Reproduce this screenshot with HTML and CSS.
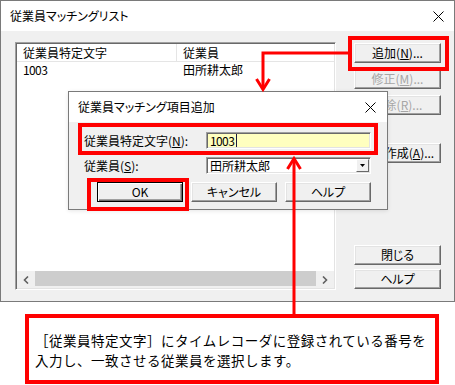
FILE: index.html
```html
<!DOCTYPE html>
<html lang="ja">
<head>
  <meta charset="UTF-8" />
  <meta name="viewport" content="width=device-width, initial-scale=1.0"/>
  <title>従業員マッチングリスト</title>
  <link rel="stylesheet" href="styles.css">
</head>
<body>
  <div class="screen">
    <div class="window main-window">
      <div class="title-bar">
        <span class="title">従業員マッチングリスト</span>
        <svg class="close" width="11" height="11" viewBox="0 0 11 11"><path d="M0.5 0.5L10.5 10.5M10.5 0.5L0.5 10.5"/></svg>
      </div>
      <div class="main-body">
        <div class="listview">
          <div class="lv-header">
            <div class="lv-col col-code">従業員特定文字</div>
            <div class="lv-col col-name">従業員</div>
          </div>
          <div class="lv-rows">
            <div class="lv-row">
              <div class="lv-col col-code"><span class="num">1003</span></div>
              <div class="lv-col col-name">田所耕太郎</div>
            </div>
          </div>
          <div class="hscroll">
            <div class="sb-arrow"><svg width="6" height="8" viewBox="0 0 6 8"><path d="M5 0.5L1.5 4L5 7.5"/></svg></div>
            <div class="sb-thumb"></div>
            <div class="sb-arrow"><svg width="6" height="8" viewBox="0 0 6 8"><path d="M1 0.5L4.5 4L1 7.5"/></svg></div>
          </div>
        </div>
        <div class="side">
          <div class="side-group">
            <button class="btn">追加(<u>N</u>)...</button>
            <button class="btn" disabled>修正(<u>M</u>)...</button>
            <button class="btn" disabled>削除(<u>R</u>)...</button>
            <button class="btn btn-gap">一括作成(<u>A</u>)...</button>
          </div>
          <div class="side-group">
            <button class="btn">閉じる</button>
            <button class="btn">ヘルプ</button>
          </div>
        </div>
      </div>
    </div>

    <div class="window dialog">
      <div class="title-bar">
        <span class="title">従業員マッチング項目追加</span>
        <svg class="close" width="11" height="11" viewBox="0 0 11 11"><path d="M0.5 0.5L10.5 10.5M10.5 0.5L0.5 10.5"/></svg>
      </div>
      <div class="dialog-body">
        <div class="field-row">
          <label class="field-label">従業員特定文字(<u>N</u>):</label>
          <div class="edit"><span class="num">1003</span><span class="caret"></span></div>
        </div>
        <div class="field-row">
          <label class="field-label">従業員(<u>S</u>):</label>
          <div class="combo">
            <span class="combo-text">田所耕太郎</span>
            <span class="combo-btn"><svg width="5" height="3" viewBox="0 0 5 3"><path d="M0 0H5L2.5 3Z"/></svg></span>
          </div>
        </div>
        <div class="dialog-buttons">
          <button class="btn btn-default">OK</button>
          <button class="btn">キャンセル</button>
          <button class="btn">ヘルプ</button>
        </div>
      </div>
    </div>

    <div class="callout">
      <div class="callout-line">［従業員特定文字］にタイムレコーダに登録されている番号を</div>
      <div class="callout-line">入力し、一致させる従業員を選択します。</div>
    </div>

    <!-- red annotation marks drawn over the screenshot -->
    <svg class="marks" width="455" height="385" viewBox="0 0 455 385">
      <g class="boxes">
        <rect x="350" y="38" width="97" height="31"/>
        <rect x="80" y="125" width="296" height="28"/>
        <rect x="89" y="180" width="98" height="29"/>
      </g>
      <g class="arrows">
        <path d="M348 53H263V89"/>
        <path d="M256.5 79L263 89.5L269.5 79"/>
        <path d="M294 314V158"/>
        <path d="M287.5 169L294 158.5L300.5 169"/>
      </g>
    </svg>
  </div>
</body>
</html>
```

FILE: styles.css
```css
* {
  box-sizing: border-box;
}

body {
  margin: 0;
  background: #fff;
  font-family: "Noto Sans CJK JP", "Noto Sans", sans-serif;
  font-size: 12px;
  color: #000;
}

.screen {
  position: relative;
  width: 455px;
  height: 385px;
  overflow: hidden;
}

u {
  text-decoration: underline;
  text-underline-offset: 1px;
}

.num {
  letter-spacing: -0.6px;
}

/* windows */
.window {
  background: #f0f0f0;
  border: 1px solid #7a7a7a;
}

.main-window {
  width: 455px;
  height: 302px;
  display: flex;
  flex-direction: column;
}

.title-bar {
  height: 30px;
  background: #fff;
  display: flex;
  align-items: center;
  justify-content: space-between;
  padding: 0 10px 0 9px;
  flex-shrink: 0;
}

.title {
  font-size: 12px;
  font-feature-settings: "palt";
  line-height: 1;
}

.close path {
  stroke: #000;
  stroke-width: 1;
  fill: none;
}

.main-body {
  flex: 1;
  display: flex;
  padding: 11px 13px 11px 14px;
}

/* list view */
.listview {
  width: 321px;
  height: 100%;
  background: #fff;
  border: 1px solid;
  border-color: #a0a0a0 #fff #fff #a0a0a0;
  box-shadow: inset 1px 1px 0 #696969, inset -1px -1px 0 #e3e3e3;
  padding: 1px;
  display: flex;
  flex-direction: column;
}

.lv-header {
  display: flex;
  height: 18px;
  border-bottom: 1px solid #e5e5e5;
  line-height: 17px;
}

.lv-col {
  padding-left: 6px;
  white-space: nowrap;
}

.col-code {
  width: 160px;
}

.lv-header .col-code {
  border-right: 1px solid #e5e5e5;
}

.lv-rows {
  flex: 1;
}

.lv-row {
  display: flex;
  height: 16px;
  line-height: 16px;
}

.hscroll {
  height: 17px;
  display: flex;
  background: #f0f0f0;
}

.sb-arrow {
  width: 18px;
  display: flex;
  align-items: center;
  justify-content: center;
}

.sb-arrow path {
  fill: none;
  stroke: #606060;
  stroke-width: 1.6;
}

.sb-thumb {
  flex: 1;
  height: 15px;
  background: #cdcdcd;
}

/* side buttons */
.side {
  width: 87px;
  margin-left: 18px;
  padding: 1px 0;
  display: flex;
  flex-direction: column;
  justify-content: space-between;
}

.side-group {
  display: flex;
  flex-direction: column;
  gap: 6px;
}

.side-group + .side-group {
  gap: 4px;
}

.btn-gap {
  margin-top: 22px;
}

.btn {
  height: 20px;
  width: 100%;
  padding: 0;
  font: inherit;
  font-feature-settings: "palt";
  line-height: 18px;
  color: #000;
  background: #f0f0f0;
  border: 1px solid;
  border-color: #fff #696969 #696969 #fff;
  box-shadow: inset -1px -1px 0 #a0a0a0, inset 1px 1px 0 #e3e3e3;
  white-space: nowrap;
}

.btn:disabled {
  color: #a6a6a6;
}

.btn-default {
  border-color: #000;
  box-shadow: inset 1px 1px 0 #fff, inset -1px -1px 0 #696969, inset -2px -2px 0 #a0a0a0;
}

/* dialog */
.dialog {
  position: absolute;
  left: 68px;
  top: 91px;
  width: 320px;
  height: 119px;
  box-shadow: 0 1px 4px rgba(0, 0, 0, 0.1);
}

.dialog .title-bar {
  padding: 0 11px 0 9px;
}

.dialog-body {
  padding: 10px 16px 0 15px;
}

.field-row {
  display: flex;
  align-items: center;
  height: 17px;
  margin-bottom: 8px;
}

.field-label {
  width: 122px;
  white-space: nowrap;
}

.edit,
.combo {
  width: 165px;
  height: 17px;
  border: 1px solid;
  border-color: #a0a0a0 #fff #fff #a0a0a0;
  box-shadow: inset 1px 1px 0 #696969, inset -1px -1px 0 #e3e3e3;
  display: flex;
  align-items: center;
}

.edit {
  background: #ffffbf;
  padding-left: 3px;
}

.caret {
  width: 1px;
  height: 13px;
  margin-left: 2px;
  background: #1a1a40;
}

.combo {
  background: #fff;
  padding: 1px;
}

.combo-text {
  flex: 1;
  padding-left: 2px;
}

.combo-btn {
  width: 13px;
  height: 100%;
  background: #f0f0f0;
  border: 1px solid;
  border-color: #fff #696969 #696969 #fff;
  display: flex;
  align-items: center;
  justify-content: center;
}

.combo-btn path {
  fill: #000;
}

.dialog-buttons {
  display: flex;
  gap: 8px;
  padding-left: 13px;
  margin-top: 4px;
}

.dialog-buttons .btn {
  width: 86px;
}

/* callout */
.callout {
  width: 414px;
  height: 70px;
  margin: 12px 0 0 25px;
  border: 4px solid #f00;
  padding: 13px 0 0 6px;
  font-size: 13.5px;
  letter-spacing: 0.5px;
  white-space: nowrap;
}

.callout-line {
  line-height: 19.6px;
}

.marks {
  position: absolute;
  left: 0;
  top: 0;
  pointer-events: none;
}

.marks .boxes rect {
  fill: none;
  stroke: #f00;
  stroke-width: 4;
}

.marks .arrows path {
  fill: none;
  stroke: #f00;
  stroke-width: 3;
}
```
